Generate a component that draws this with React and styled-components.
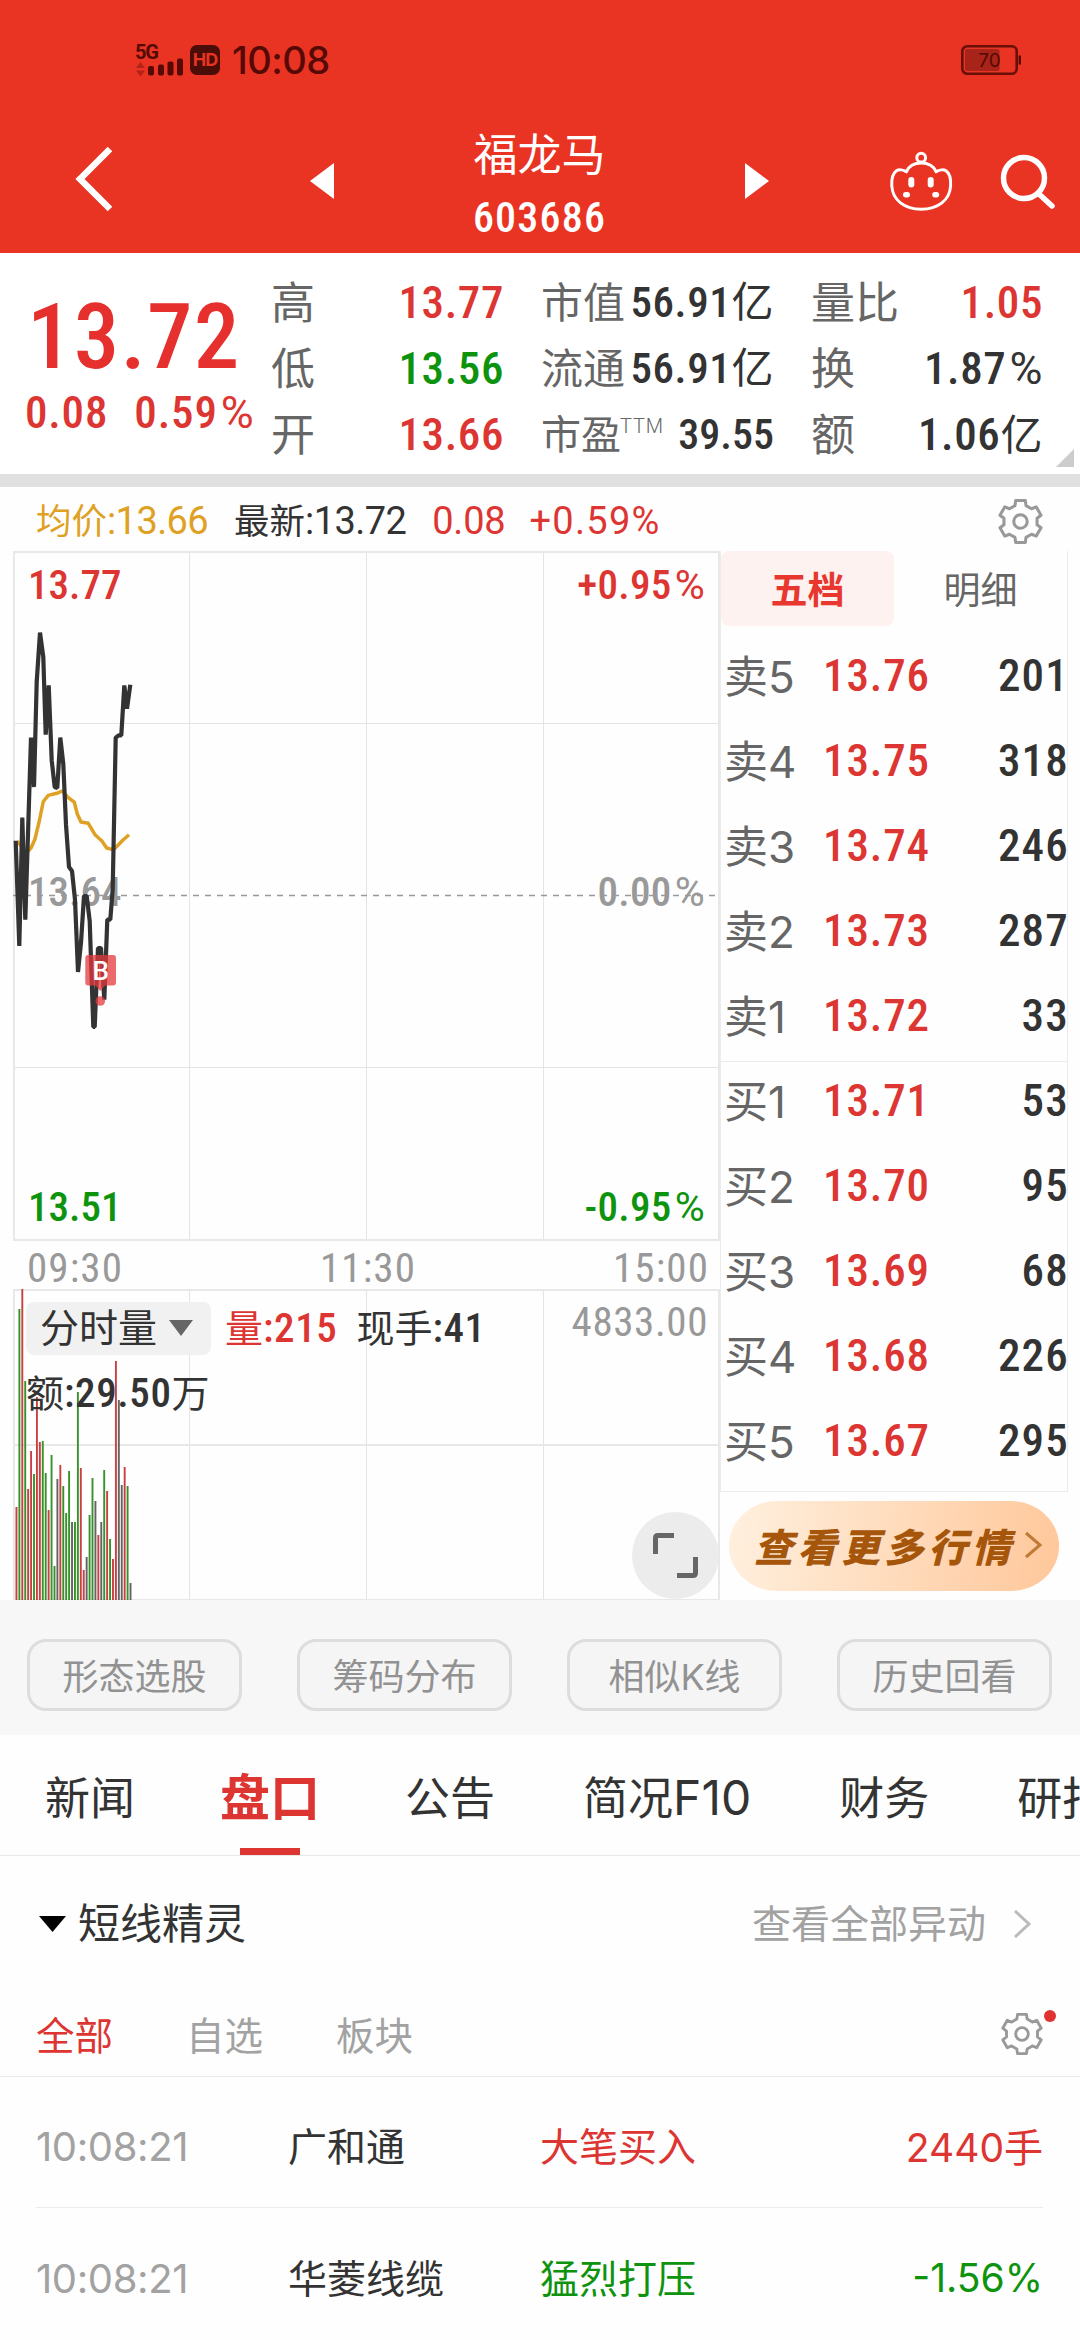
import React from "react";
import styled, { createGlobalStyle } from "styled-components";

const RED = "#dc3532";
const GREEN = "#0e930e";
const DARK = "#333";

const GlobalStyle = createGlobalStyle`
  * {
    box-sizing: border-box;
  }
  html, body {
    margin: 0;
    padding: 0;
    background: #fefefe;
  }
  body {
    width: 1080px;
    height: 2340px;
    overflow: hidden;
    color: ${DARK};
    font-family: Inter, "Noto Sans CJK SC", sans-serif;
  }
  svg {
    display: block;
  }
`;

const Page = styled.div`
  display: flex;
  flex-direction: column;
  width: 1080px;
  height: 2340px;
  overflow: hidden;
  white-space: nowrap;
`;

const Num = styled.span`
  font-family: Roboto, "Noto Sans CJK SC", sans-serif;
  font-stretch: ${(p) => p.$stretch || 87}%;
  font-weight: ${(p) => p.$weight || 500};
  font-size: ${(p) => p.$size || 45}px;
  letter-spacing: ${(p) => (p.$ls === undefined ? 0.6 : p.$ls)}px;
  color: ${(p) => p.$color || "inherit"};
`;

const Pct = styled.span`
  margin-left: 3px;
  font-stretch: 97%;
  font-weight: 400;
`;

/* ---------- header ---------- */

const Header = styled.header`
  height: 253px;
  background: #e93323;
  color: #fff;
`;

const StatusBar = styled.div`
  display: flex;
  align-items: center;
  height: 120px;
  padding: 0 59px 0 135px;
  color: #560a05;
`;

const HdBadge = styled.span`
  width: 30px;
  height: 30px;
  margin-left: 6px;
  border-radius: 7px;
  background: #4a0d08;
  color: #e93323;
  font-size: 18px;
  font-weight: 700;
  line-height: 30px;
  text-align: center;
  letter-spacing: -1px;
`;

const Clock = styled.span`
  margin-left: 12px;
  font-size: 38px;
  font-weight: 500;
  letter-spacing: -0.5px;
`;

const Battery = styled.svg`
  margin-left: auto;
`;

const NavBar = styled.div`
  display: flex;
  align-items: center;
  height: 133px;
  padding: 0 23px 11px 74px;
`;

const BackIcon = styled.svg`
  margin-bottom: 5px;
`;

const StockTitle = styled.div`
  display: flex;
  flex-direction: column;
  align-items: center;
  width: 411px;
  padding-top: 10px;
`;

const StockName = styled.div`
  font-size: 44px;
  line-height: 63px;
  font-weight: 400;
`;

const StockCode = styled(Num)`
  line-height: 62px;
`;

const NavIcons = styled.div`
  display: flex;
  align-items: center;
  gap: 46px;
  margin-left: auto;
`;

/* ---------- quote summary ---------- */

const Quote = styled.section`
  display: grid;
  grid-template-columns: 271px 270px 270px 269px;
  height: 222px;
  background: #fff;
`;

const MainPrice = styled.div`
  display: flex;
  flex-direction: column;
  padding: 34px 0 0 25px;
  color: ${RED};
`;

const BigPrice = styled(Num)`
  padding-left: 2px;
  line-height: 100px;
`;

const Change = styled.div`
  display: flex;
  gap: 26px;
  line-height: 52px;
`;

const StatCol = styled.div`
  display: grid;
  grid-template-rows: repeat(3, 66px);
  width: ${(p) => p.$width || 270}px;
  padding: 16px ${(p) => p.$right || 0}px 0 0;
`;

const Stat = styled.div`
  display: flex;
  justify-content: space-between;
  align-items: center;
`;

const StatLabel = styled.span`
  display: flex;
  padding-bottom: 5px;
  color: #666;
  font-size: ${(p) => p.$size || 44}px;
`;

const Ttm = styled.span`
  margin: 11px 0 0 -1px;
  font-size: 20px;
  font-family: Roboto, sans-serif;
  font-weight: 300;
  letter-spacing: 0.8px;
`;

const Unit = styled.span`
  font-size: 42px;
  font-weight: 400;
  line-height: 0;
`;

const LastCol = styled.div`
  display: flex;
  gap: 13px;
`;

const CornerMark = styled.svg`
  align-self: flex-end;
  margin-bottom: 7px;
`;

const Divider = styled.div`
  height: 13px;
  background: #e0e0e0;
`;

/* ---------- info line ---------- */

const InfoLine = styled.div`
  display: flex;
  align-items: center;
  height: 64px;
  padding: 4px 36px 0 36px;
  font-size: 36px;
`;

const InfoItem = styled(Num)`
  margin-right: ${(p) => p.$gap || 26}px;
`;

const Cjk = styled.span`
  font-size: ${(p) => p.$size}px;
  font-weight: 400;
  letter-spacing: 0;
  line-height: 0;
`;

const Push = styled.span`
  margin-left: auto;
`;

/* ---------- chart area ---------- */

const ChartArea = styled.section`
  display: flex;
  height: 1049px;
`;

const Charts = styled.div`
  display: flex;
  flex-direction: column;
  width: 707px;
  margin-left: 13px;
`;

const Stack = styled.div`
  display: grid;
  height: ${(p) => p.$h}px;

  & > * {
    grid-area: 1 / 1;
  }
`;

const PriceLabels = styled.div`
  display: grid;
  grid-template-rows: 307px 315px 50px;
  padding: 9px 15px 0 15px;
`;

const LabelRow = styled.div`
  display: flex;
  justify-content: space-between;
  line-height: 50px;
`;

const TimeAxis = styled(LabelRow)`
  height: 48px;
  padding: 2px 11px 0 14px;
  color: #999;
`;

const VolumeHead = styled.div`
  display: flex;
  flex-direction: column;
  padding: 13px 12px 0 13px;
`;

const VolumeRow = styled.div`
  display: flex;
  align-items: center;
  height: ${(p) => p.$h}px;
`;

const Selector = styled.div`
  display: flex;
  align-items: center;
  gap: 12px;
  width: 185px;
  height: 53px;
  padding-left: 14px;
  margin-right: 14px;
  border-radius: 8px;
  background: rgba(240, 240, 240, 0.92);
  font-size: 39px;
  line-height: 50px;
`;

const MaxVolume = styled(Num)`
  margin-left: auto;
  padding-bottom: 12px;
`;

const ExpandButton = styled.button`
  display: flex;
  align-items: center;
  justify-content: center;
  place-self: end;
  width: 87px;
  height: 87px;
  margin: 0 1px 2px 0;
  padding: 0;
  border: 0;
  border-radius: 50%;
  background: #ececec;
`;

const OrderBook = styled.div`
  width: 360px;
  padding-left: 0;
`;

const BookBox = styled.div`
  width: 348px;
  height: 941px;
  border: solid #ececec;
  border-width: 0 1px 1px 1px;
`;

const BookTabs = styled.div`
  display: flex;
`;

const BookTab = styled.div`
  flex: 1;
  height: 75px;
  border-radius: 8px;
  line-height: 80px;
  text-align: center;
  font-size: 37px;
  font-weight: ${(p) => (p.$active ? 700 : 400)};
  color: ${(p) => (p.$active ? "#e8372f" : "#666")};
  background: ${(p) => (p.$active ? "#fef2f1" : "transparent")};
`;

const BookRows = styled.div`
  height: ${(p) => (p.$first ? 436 : 425)}px;
  padding-top: ${(p) => (p.$first ? 7 : 1)}px;
  border-bottom: ${(p) => (p.$first ? "1px solid #ececec" : "0")};
  margin-bottom: ${(p) => (p.$first ? -5 : 0)}px;
`;

const BookRow = styled.div`
  display: grid;
  grid-template-columns: 99px 120px 1fr;
  align-items: center;
  height: 85px;
  padding: 0 0 0 3px;
`;

const Side = styled.span`
  font-size: 44px;
  padding-bottom: 2px;
  color: #666;
`;

const Volume = styled(Num)`
  margin-right: -2px;
  text-align: right;
`;

const MoreButton = styled.button`
  display: flex;
  align-items: center;
  gap: 9px;
  width: 330px;
  height: 90px;
  margin: 9px 0 0 9px;
  padding: 0 0 2px 25px;
  border: 0;
  border-radius: 48px / 45px;
  background: linear-gradient(100deg, #fff0df 0%, #ffc79a 100%);
  color: #a6560b;
  font-family: Inter, "Noto Sans CJK SC", sans-serif;
  font-size: 39px;
  font-weight: 900;
  font-style: italic;
  letter-spacing: 4.5px;
`;

/* ---------- tools ---------- */

const Tools = styled.section`
  display: flex;
  gap: 55px;
  height: 135px;
  padding: 39px 27px 0;
  background: #f7f7f7;
`;

const ToolButton = styled.button`
  width: 215px;
  height: 72px;
  padding: 0;
  border: 3px solid #ddd;
  border-radius: 19px;
  background: #f5f5f5;
  color: #929292;
  font-family: Inter, "Noto Sans CJK SC", sans-serif;
  font-size: 36px;
  line-height: 70px;
`;

/* ---------- tabs ---------- */

const Tabs = styled.nav`
  display: flex;
  gap: 88px;
  height: 121px;
  padding-left: 45px;
  border-bottom: 1px solid #e8e8e8;
`;

const Tab = styled.div`
  display: flex;
  flex-direction: column;
  align-items: center;
  justify-content: space-between;
  flex-shrink: 0;
  margin: 0 ${(p) => (p.$active ? -3 : 0)}px;
  font-size: ${(p) => (p.$active ? 50 : 45)}px;
  font-weight: ${(p) => (p.$active ? 700 : 400)};
  color: ${(p) => (p.$active ? RED : DARK)};
  line-height: 127px;

  &::after {
    content: "";
    display: ${(p) => (p.$active ? "block" : "none")};
    flex-shrink: 0;
    width: 60px;
    height: 7px;
    margin-top: -14px;
    background: ${RED};
  }
`;

const Latin = styled.span`
  font-size: 48px;
  line-height: 0;
`;

/* ---------- alerts list ---------- */

const AlertsHead = styled.div`
  display: flex;
  align-items: center;
  height: 136px;
  padding: 1px 48px 0 39px;
  font-size: 42px;
  line-height: 60px;
`;

const AlertsTitle = styled.span`
  margin-left: 12px;
`;

const AllLink = styled.span`
  display: flex;
  align-items: center;
  gap: 27px;
  margin-left: auto;
  color: #a2a2a2;
  font-size: 39px;
`;

const Filters = styled.div`
  display: flex;
  align-items: center;
  height: 86px;
  padding: 0 24px 0 36px;
  border-bottom: 1px solid #e8e8e8;
`;

const Filter = styled.span`
  width: 150px;
  padding-bottom: 2px;
  font-size: 38.5px;
  color: ${(p) => (p.$active ? RED : "#a2a2a2")};
`;

const SettingsWithDot = styled.span`
  display: flex;
  margin-left: auto;
`;

const Dot = styled.span`
  width: 12px;
  height: 12px;
  margin-top: -2px;
  border-radius: 50%;
  background: #e03232;
`;

const AlertRow = styled.div`
  display: grid;
  grid-template-columns: 252px 252px 1fr auto;
  align-items: center;
  height: 132px;
  margin: 0 37px 0 36px;
  padding-top: 4px;
  border-bottom: 1px solid #ececec;
  font-size: 39px;
  color: ${(p) => p.$color};

  &:last-child {
    border-bottom: 0;
  }
`;

const AlertTime = styled.span`
  padding-top: 5px;
  color: #a2a2a2;
  font-size: 40px;
  letter-spacing: -0.4px;
`;

const AlertName = styled.span`
  color: ${DARK};
`;

const AlertValue = styled.span`
  padding-top: 2px;
`;

/* ---------- data ---------- */

const sells = [
  ["卖5", "13.76", "201"],
  ["卖4", "13.75", "318"],
  ["卖3", "13.74", "246"],
  ["卖2", "13.73", "287"],
  ["卖1", "13.72", "33"],
];

const buys = [
  ["买1", "13.71", "53"],
  ["买2", "13.70", "95"],
  ["买3", "13.69", "68"],
  ["买4", "13.68", "226"],
  ["买5", "13.67", "295"],
];

const tools = ["形态选股", "筹码分布", "相似K线", "历史回看"];
const tabs = ["新闻", "盘口", "公告", "简况F10", "财务", "研报"];

const alerts = [
  { time: "10:08:21", name: "广和通", type: "大笔买入", value: "2440手", color: RED },
  { time: "10:08:21", name: "华菱线缆", type: "猛烈打压", value: "-1.56%", color: GREEN },
];

const pricePoints =
  "2.7,289.8 6.3,395 9.3,266.6 12.3,368.7 18,186.6 21,236 23.7,131 27,81.6 30.3,106 32.7,183.7 35.7,134.4 38.7,209.4 41.7,236 44.3,237 47.3,186.6 50.3,213 53,273.7 56,316 59,320 62,348.7 65,421 68,391.6 71,345 73.7,345 76.7,370 80.3,476 81.7,476 85,397 88,397 91.3,448.7 94.3,368.7 97.3,368.7 99.7,338 102.7,186.6 105.7,184.4 108.3,184.4 111.3,134.4 114,157.6 117.3,133.7";

const averagePoints =
  "4,290 8,295 13,302.3 18,297 22,288 26.3,270 30.3,250.5 35.3,244.4 43.7,242.3 49.3,240 55.3,246.6 61.3,251.2 64.3,263 68,271 75.3,272.3 82,283.7 88.7,289.8 93.7,297 98.7,298.4 102,297.3 110.3,288.7 116,283.7";

// one bar per minute: r up, g down, k flat
const volumes = [
  ["r", 94], ["g", 292], ["r", 312], ["g", 220], ["r", 112], ["r", 150], ["g", 127], ["r", 204],
  ["r", 159], ["g", 160], ["g", 128], ["r", 91], ["g", 146], ["g", 35], ["k", 122], ["r", 136],
  ["g", 115], ["g", 88], ["g", 130], ["k", 79], ["g", 79], ["g", 209], ["r", 133], ["r", 31],
  ["k", 44], ["g", 86], ["g", 123], ["k", 100], ["r", 66], ["k", 79], ["g", 131], ["r", 110],
  ["g", 62], ["r", 42], ["r", 240], ["k", 201], ["k", 116], ["r", 134], ["g", 115], ["k", 18],
];
const barColors = { r: "#c94040", g: "#37922c", k: "#636363" };

/* ---------- icons ---------- */

const gearPoints = () => {
  const pts = [];
  for (let k = 0; k < 6; k++) {
    [
      [-13, 21],
      [13, 21],
      [19, 16.5],
      [41, 16.5],
    ].forEach(([deg, r]) => {
      const a = ((k * 60 + deg) * Math.PI) / 180;
      pts.push(`${(24 + r * Math.sin(a)).toFixed(1)},${(24 - r * Math.cos(a)).toFixed(1)}`);
    });
  }
  return pts.join(" ");
};

const Gear = ({ size }) => (
  <svg width={size} height={size} viewBox="1 1 46 46" fill="none" stroke="#999" strokeWidth="3">
    <polygon points={gearPoints()} strokeLinejoin="round" />
    <circle cx="24" cy="24" r="6.6" />
  </svg>
);

const Signal = () => (
  <svg width="49" height="50" viewBox="0 -8 49 50">
    <text x="0" y="15.5" fontSize="20" fontWeight="700" fontFamily="Roboto, sans-serif" fill="#560a05" textLength="24">
      5G
    </text>
    <path d="M1 25 L5.5 19 L10 25 Z M1 27.5 L10 27.5 L5.5 33.5 Z" fill="#b32218" />
    <rect x="13" y="23" width="6" height="9.5" rx="2" fill="#560a05" />
    <rect x="23" y="21.5" width="6" height="11" rx="2" fill="#560a05" />
    <rect x="32.5" y="18.5" width="6" height="14" rx="2" fill="#560a05" />
    <rect x="42" y="15.5" width="6" height="17" rx="2" fill="#560a05" />
  </svg>
);

const Robot = () => (
  <svg width="64" height="62" viewBox="889 150 64 62" fill="none" stroke="#fff" strokeWidth="3">
    <circle cx="921.2" cy="157.7" r="4.4" />
    <path
      strokeLinejoin="round"
      d="M906.3 171.8 C909 165.5 915 163 921.2 163 C927.5 163 933.5 165.5 936.2 171.8 C939 169.8 943.5 169 946 170.8 C950.3 173.8 951 180 950.6 186 C949.8 200 938 209.2 921.2 209.2 C904.5 209.2 892.6 200 891.8 186 C891.4 180 892.2 173.8 896.5 170.8 C899 169 903.5 169.8 906.3 171.8 Z"
    />
    <g fill="#fff" stroke="none">
      <rect x="908.3" y="177" width="6" height="10.5" rx="3" />
      <rect x="927.7" y="177" width="6" height="10.5" rx="3" />
      <rect x="903" y="192" width="7" height="5.5" rx="2.7" />
      <rect x="932.2" y="192" width="7" height="5.5" rx="2.7" />
    </g>
  </svg>
);

const PriceGrid = () => (
  <svg width="707" height="690" viewBox="0 0 707 690">
    <g stroke="#e4e4e4" strokeWidth="1">
      <path d="M176.5 1 V689 M353.5 1 V689 M530.5 1 V689 M0 172.5 H706 M0 516.5 H706" />
    </g>
    <rect x="1" y="1" width="705" height="688" fill="none" stroke="#e8e8e8" strokeWidth="2" />
    <path d="M0 344.5 H706" stroke="#999" strokeWidth="1.5" strokeDasharray="6 6" />
  </svg>
);

const PriceLine = () => (
  <svg width="707" height="690" viewBox="0 0 707 690">
    <polyline points={averagePoints} fill="none" stroke="#dfa124" strokeWidth="3.5" strokeLinejoin="round" />
    <polyline points={pricePoints} fill="none" stroke="#333" strokeWidth="4.2" strokeLinejoin="bevel" />
    <g fill="#e4383c" fillOpacity="0.75">
      <path d="M75.3 404 H100 a3 3 0 0 1 3 3 V431.6 a3 3 0 0 1 -3 3 H92 L87.3 440 L82.6 434.6 H75.3 a3 3 0 0 1 -3 -3 V407 a3 3 0 0 1 3 -3 Z" />
      <circle cx="87.3" cy="450" r="4.8" />
    </g>
    <text x="87.8" y="429" fontSize="26" fontWeight="500" fontFamily="Roboto, sans-serif" textAnchor="middle" fill="#fff">
      B
    </text>
  </svg>
);

const VolumeChart = () => (
  <svg width="707" height="312" viewBox="0 0 707 312">
    <path d="M176.5 1 V311 M353.5 1 V311 M530.5 1 V311" stroke="#e4e4e4" />
    <path d="M0 156 H706" stroke="#e8e8e8" strokeWidth="2" />
    <rect x="1" y="1" width="705" height="310" fill="none" stroke="#e8e8e8" strokeWidth="2" />
    {volumes.map(([kind, h], i) => (
      <rect key={i} x={2.5 + i * 2.925} y={312 - h} width="1.9" height={h} fill={barColors[kind]} />
    ))}
  </svg>
);

const Book = ({ rows, first }) => (
  <BookRows $first={first}>
    {rows.map(([side, price, vol]) => (
      <BookRow key={side}>
        <Side>{side}</Side>
        <Num $color={RED} $ls={0.9}>
          {price}
        </Num>
        <Volume $ls={1.2}>{vol}</Volume>
      </BookRow>
    ))}
  </BookRows>
);

const App = () => {
  return (
    <Page>
      <GlobalStyle />
      <Header>
        <StatusBar>
          <Signal />
          <HdBadge>HD</HdBadge>
          <Clock>10:08</Clock>
          <Battery width="60" height="30" viewBox="0 0 60 30">
            <rect x="1.3" y="1.3" width="54.4" height="27.4" rx="5" fill="none" stroke="#6a0f08" strokeWidth="2.6" />
            <rect x="4" y="4" width="34.5" height="22" rx="2" fill="#a8241a" />
            <path d="M58.8 10.5 V19.5" stroke="#560a05" strokeWidth="2.4" />
            <text x="28.5" y="22" fontSize="19" fontFamily="Inter, sans-serif" textAnchor="middle" fill="#560a05">
              70
            </text>
          </Battery>
        </StatusBar>
        <NavBar>
          <BackIcon width="236" height="66" viewBox="0 0 236 66" fill="none">
            <path d="M36 3 L6 33 L36 63" stroke="#fff" strokeWidth="6.5" />
          </BackIcon>
          <svg width="24" height="36" viewBox="0 0 24 36">
            <path d="M24 0 V36 L0 18 Z" fill="#fff" />
          </svg>
          <StockTitle>
            <StockName>福龙马</StockName>
            <StockCode $size={42} $ls={1.2}>603686</StockCode>
          </StockTitle>
          <svg width="24" height="36" viewBox="0 0 24 36">
            <path d="M0 0 V36 L24 18 Z" fill="#fff" />
          </svg>
          <NavIcons>
            <Robot />
            <svg width="58" height="58" viewBox="0 0 58 58" fill="none" stroke="#fff" strokeWidth="5.5">
              <circle cx="25" cy="26" r="20.5" />
              <path d="M40 42 L53 54" strokeLinecap="round" />
            </svg>
          </NavIcons>
        </NavBar>
      </Header>

      <Quote>
        <MainPrice>
          <BigPrice $size={91} $ls={1.2} $color="#e6302e">13.72</BigPrice>
          <Change>
            <Num $ls={0.8}>0.08</Num>
            <Num $ls={0.9}>
              0.59<Pct>%</Pct>
            </Num>
          </Change>
        </MainPrice>
        <StatCol $right={37}>
          <Stat>
            <StatLabel>高</StatLabel>
            <Num $color={RED}>13.77</Num>
          </Stat>
          <Stat>
            <StatLabel>低</StatLabel>
            <Num $color={GREEN}>13.56</Num>
          </Stat>
          <Stat>
            <StatLabel>开</StatLabel>
            <Num $color={RED}>13.66</Num>
          </Stat>
        </StatCol>
        <StatCol $right={37}>
          <Stat>
            <StatLabel $size={42}>市值</StatLabel>
            <Num $size={43}>
              56.91<Unit>亿</Unit>
            </Num>
          </Stat>
          <Stat>
            <StatLabel $size={42}>流通</StatLabel>
            <Num $size={43}>
              56.91<Unit>亿</Unit>
            </Num>
          </Stat>
          <Stat>
            <StatLabel $size={40}>
              市盈<Ttm>TTM</Ttm>
            </StatLabel>
            <Num $size={42} $ls={0}>39.55</Num>
          </Stat>
        </StatCol>
        <LastCol>
          <StatCol $width={232}>
            <Stat>
              <StatLabel>量比</StatLabel>
              <Num $color={RED}>1.05</Num>
            </Stat>
            <Stat>
              <StatLabel>换</StatLabel>
              <Num>
                1.87<Pct>%</Pct>
              </Num>
            </Stat>
            <Stat>
              <StatLabel>额</StatLabel>
              <Num>
                1.06<Unit>亿</Unit>
              </Num>
            </Stat>
          </StatCol>
          <CornerMark width="18" height="18" viewBox="0 0 18 18">
            <path d="M18 0 V18 H0 Z" fill="#ccc" />
          </CornerMark>
        </LastCol>
      </Quote>
      <Divider />

      <InfoLine>
        <InfoItem $size={38} $stretch={100} $weight={400} $ls={-0.6} $color="#dfa124">
          <Cjk $size={35.5}>均价</Cjk>:13.66
        </InfoItem>
        <InfoItem $size={38} $stretch={100} $weight={400} $ls={-0.6}>
          <Cjk $size={35.5}>最新</Cjk>:13.72
        </InfoItem>
        <InfoItem $size={38} $stretch={100} $weight={400} $ls={-0.2} $color={RED} $gap={24}>0.08</InfoItem>
        <InfoItem $size={38} $stretch={100} $weight={400} $ls={1.3} $color={RED}>+0.59%</InfoItem>
        <Push>
          <Gear size={47} />
        </Push>
      </InfoLine>

      <ChartArea>
        <Charts>
          <Stack $h={690}>
            <PriceGrid />
            <PriceLabels>
              <LabelRow>
                <Num $size={41} $ls={0} $color={RED}>13.77</Num>
                <Num $size={41} $ls={0.3} $color={RED}>
                  +0.95<Pct>%</Pct>
                </Num>
              </LabelRow>
              <LabelRow>
                <Num $size={41} $ls={0} $color="#999">13.64</Num>
                <Num $size={41} $ls={0.3} $color="#999">
                  0.00<Pct>%</Pct>
                </Num>
              </LabelRow>
              <LabelRow>
                <Num $size={41} $ls={0} $color={GREEN}>13.51</Num>
                <Num $size={41} $ls={0.3} $color={GREEN}>
                  -0.95<Pct>%</Pct>
                </Num>
              </LabelRow>
            </PriceLabels>
            <PriceLine />
          </Stack>
          <TimeAxis>
            <Num $size={41} $weight={400} $ls={1.1}>09:30</Num>
            <Num $size={41} $weight={400} $ls={1.1}>11:30</Num>
            <Num $size={41} $weight={400} $ls={1.1}>15:00</Num>
          </TimeAxis>
          <Stack $h={311}>
            <VolumeChart />
            <VolumeHead>
              <VolumeRow $h={53}>
                <Selector>
                  分时量
                  <svg width="24" height="16" viewBox="0 0 24 16">
                    <path d="M0 0 H24 L12 16 Z" fill="#666" />
                  </svg>
                </Selector>
                <InfoItem $size={41} $color={RED} $gap={19}>
                  <Cjk $size={38}>量</Cjk>:215
                </InfoItem>
                <InfoItem $size={41}>
                  <Cjk $size={38}>现手</Cjk>:41
                </InfoItem>
                <MaxVolume $size={41} $weight={400} $color="#999">4833.00</MaxVolume>
              </VolumeRow>
              <VolumeRow $h={76}>
                <Num $size={41}>
                  <Cjk $size={38}>额</Cjk>:29.50<Cjk $size={38}>万</Cjk>
                </Num>
              </VolumeRow>
            </VolumeHead>
            <ExpandButton>
              <svg width="45" height="45" viewBox="0 0 45 45" fill="none" stroke="#666" strokeWidth="5">
                <path d="M2.5 21 V5 Q2.5 2.5 5 2.5 H21 M24 42.5 H40 Q42.5 42.5 42.5 40 V24" />
              </svg>
            </ExpandButton>
          </Stack>
        </Charts>

        <OrderBook>
          <BookBox>
            <BookTabs>
              <BookTab $active>五档</BookTab>
              <BookTab>明细</BookTab>
            </BookTabs>
            <Book rows={sells} first />
            <Book rows={buys} />
          </BookBox>
          <MoreButton>
            查看更多行情
            <svg width="18" height="28" viewBox="0 0 18 28" fill="none">
              <path d="M2 2 L16 14 L2 26" stroke="#c07a35" strokeWidth="3" />
            </svg>
          </MoreButton>
        </OrderBook>
      </ChartArea>

      <Tools>
        {tools.map((name) => (
          <ToolButton key={name}>{name}</ToolButton>
        ))}
      </Tools>

      <Tabs>
        {tabs.map((name) => (
          <Tab key={name} $active={name === "盘口"}>
            <span>
              {name.replace("F10", "")}
              {name.includes("F10") && <Latin>F10</Latin>}
            </span>
          </Tab>
        ))}
      </Tabs>

      <AlertsHead>
        <svg width="27" height="16" viewBox="0 0 27 16">
          <path d="M0 0 H27 L13.5 16 Z" fill="#000" />
        </svg>
        <AlertsTitle>短线精灵</AlertsTitle>
        <AllLink>
          查看全部异动
          <svg width="19" height="30" viewBox="0 0 19 30" fill="none">
            <path d="M2 2 L16 15 L2 28" stroke="#bbb" strokeWidth="3" />
          </svg>
        </AllLink>
      </AlertsHead>
      <Filters>
        <Filter $active>全部</Filter>
        <Filter>自选</Filter>
        <Filter>板块</Filter>
        <SettingsWithDot>
          <Gear size={44} />
          <Dot />
        </SettingsWithDot>
      </Filters>
      {alerts.map((item) => (
        <AlertRow key={item.name} $color={item.color}>
          <AlertTime>{item.time}</AlertTime>
          <AlertName>{item.name}</AlertName>
          <span>{item.type}</span>
          <AlertValue>{item.value}</AlertValue>
        </AlertRow>
      ))}
    </Page>
  );
};

export default App;
